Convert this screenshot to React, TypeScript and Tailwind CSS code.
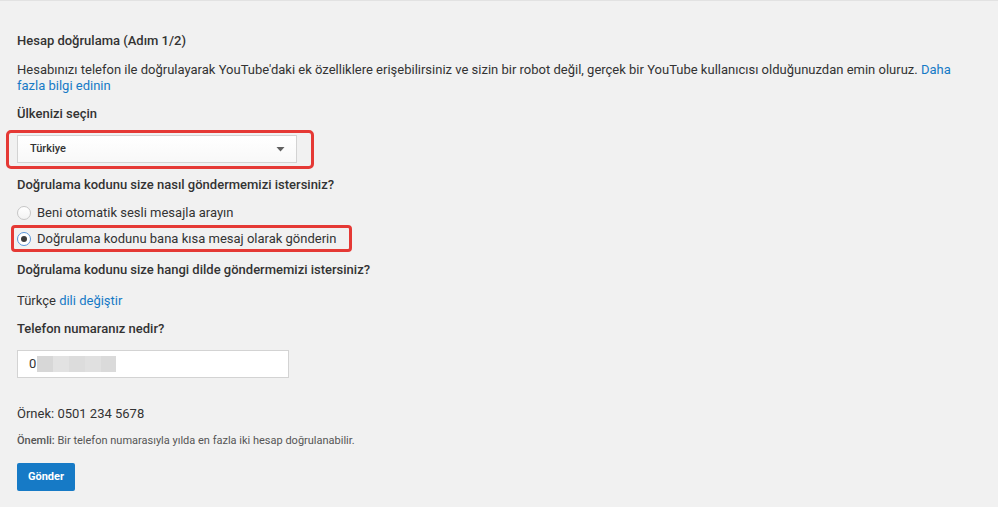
import React from "react";

export default function App() {
  return (
    <div
      className="w-[998px] h-[507px] bg-[#f1f1f1] border-t border-[#e2e2e2] text-[#333333] overflow-hidden"
      style={{ fontFamily: "Roboto, 'Noto Sans', Arial, sans-serif" }}
    >
      <div className="pl-[17px] pr-[20px]">
        <div className="mt-[32px] h-[16px] leading-[16px] text-[13px] font-medium">
          Hesap doğrulama (Adım 1/2)
        </div>
        <p className="mt-[13px] leading-[16px] text-[13px]">
          Hesabınızı telefon ile doğrulayarak YouTube'daki ek özelliklere erişebilirsiniz ve sizin bir robot değil, gerçek bir YouTube kullanıcısı olduğunuzdan emin oluruz.{" "}
          <a className="text-[#167ac6]">
            Daha
            <br />
            fazla bilgi edinin
          </a>
        </p>
        <div className="mt-[12px] h-[16px] leading-[16px] text-[13px] font-medium">Ülkenizi seçin</div>

        <div className="relative mt-[13px] w-[280px]">
          <div className="absolute left-[-11px] right-[-17px] top-[-5px] bottom-[-6px] border-[3px] border-[#e53935] rounded-[5px]" />
          <div className="h-[28px] bg-gradient-to-b from-white to-[#f8f8f8] border border-[#d3d3d3] flex items-center justify-between pl-[12px] pr-[11px]">
            <span className="text-[11px] font-medium text-[#333]">Türkiye</span>
            <svg width="9" height="5" viewBox="0 0 9 5">
              <path d="M0.5 0 L8.5 0 L4.5 4.5 Z" fill="#606060" />
            </svg>
          </div>
        </div>

        <div className="mt-[14px] h-[16px] leading-[16px] text-[13px] font-medium">
          Doğrulama kodunu size nasıl göndermemizi istersiniz?
        </div>

        <div className="mt-[12px] h-[16px] flex items-center text-[13px]">
          <span className="w-[14px] h-[14px] rounded-full border border-[#c6c6c6] bg-gradient-to-b from-white to-[#f3f3f3] mr-[6px] shrink-0" />
          <span className="leading-[16px]">Beni otomatik sesli mesajla arayın</span>
        </div>

        <div className="relative mt-[10px] h-[16px] w-fit flex items-center text-[13px]">
          <div className="absolute left-[-6px] right-[-16px] top-[-6px] bottom-[-5px] border-[3px] border-[#e53935] rounded-[4px]" />
          <span className="w-[14px] h-[14px] rounded-full border border-[#5a95d8] bg-white mr-[6px] shrink-0 flex items-center justify-center">
            <span className="w-[6px] h-[6px] rounded-full bg-[#3c3c3c]" />
          </span>
          <span className="leading-[16px]">Doğrulama kodunu bana kısa mesaj olarak gönderin</span>
        </div>

        <div className="mt-[15px] h-[16px] leading-[16px] text-[13px] font-medium">
          Doğrulama kodunu size hangi dilde göndermemizi istersiniz?
        </div>

        <div className="mt-[15px] h-[16px] leading-[16px] text-[13px]">
          Türkçe <a className="text-[#167ac6]">dili değiştir</a>
        </div>

        <div className="mt-[12px] h-[16px] leading-[16px] text-[13px] font-medium">Telefon numaranız nedir?</div>

        <div className="mt-[13px] w-[272px] h-[28px] bg-white border border-[#d3d3d3] flex items-center pl-[11px]">
          <span className="text-[13px] text-[#333]">0</span>
          <div className="flex h-[16px] ml-[1px]">
            <div className="w-[16px] bg-[#d7d7d7]" />
            <div className="w-[16px] bg-[#e2e2e2]" />
            <div className="w-[16px] bg-[#dcdcdc]" />
            <div className="w-[16px] bg-[#e0e0e0]" />
            <div className="w-[15px] bg-[#dadada]" />
          </div>
        </div>

        <div className="mt-[28px] h-[16px] leading-[16px] text-[13px]">Örnek: 0501 234 5678</div>

        <div className="mt-[12px] h-[14px] leading-[14px] text-[11px] text-[#555]">
          <span className="font-medium">Önemli:</span> Bir telefon numarasıyla yılda en fazla iki hesap doğrulanabilir.
        </div>

        <button className="mt-[15px] h-[28px] w-[58px] bg-[#167ac6] rounded-[2px] text-white text-[11px] font-bold flex items-center justify-center">
          Gönder
        </button>
      </div>
    </div>
  );
}
